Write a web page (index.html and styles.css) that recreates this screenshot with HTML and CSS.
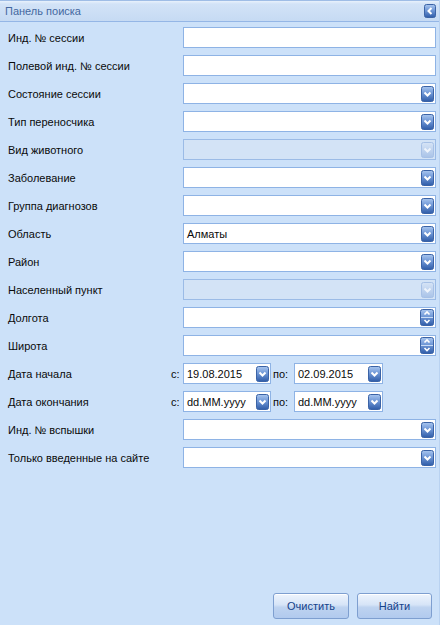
FILE: index.html
```html
<!DOCTYPE html>
<html lang="ru">
<head>
<meta charset="utf-8">
<title>Панель поиска</title>
<link rel="stylesheet" href="styles.css">
</head>
<body>
<svg class="defs" width="0" height="0" aria-hidden="true">
  <defs>
    <linearGradient id="gb" x1="0" y1="0" x2="0" y2="1">
      <stop offset="0" stop-color="#a9c6ef"/>
      <stop offset="0.45" stop-color="#6f97d6"/>
      <stop offset="1" stop-color="#2f5ca8"/>
    </linearGradient>
    <linearGradient id="gd" x1="0" y1="0" x2="0" y2="1">
      <stop offset="0" stop-color="#d6e4f6"/>
      <stop offset="1" stop-color="#a9c3e8"/>
    </linearGradient>
    <symbol id="dd" viewBox="0 0 13 16">
      <rect x="0.5" y="0.5" width="12" height="15" rx="2" fill="url(#gb)" stroke="#3b63a6"/>
      <path d="M3.5 6.5 L6.5 9.5 L9.5 6.5" fill="none" stroke="#fff" stroke-width="2"/>
    </symbol>
    <symbol id="ddoff" viewBox="0 0 13 16">
      <rect x="0.5" y="0.5" width="12" height="15" rx="2" fill="url(#gd)" stroke="#a6c0e6"/>
      <path d="M3.5 6.5 L6.5 9.5 L9.5 6.5" fill="none" stroke="#eef4fc" stroke-width="2"/>
    </symbol>
    <symbol id="spin" viewBox="0 0 14 17">
      <rect x="0.5" y="0.5" width="13" height="16" rx="2" fill="url(#gb)" stroke="#3b63a6"/>
      <path d="M1 8.5 H13" stroke="#c9dcf5" stroke-width="1"/>
      <path d="M4.5 5.5 L7 3 L9.5 5.5" fill="none" stroke="#fff" stroke-width="1.6"/>
      <path d="M4.5 11 L7 13.5 L9.5 11" fill="none" stroke="#fff" stroke-width="1.6"/>
    </symbol>
    <symbol id="close" viewBox="0 0 12 14">
      <rect x="0.5" y="0.5" width="11" height="13" rx="2" fill="url(#gb)" stroke="#3b63a6"/>
      <path d="M7.5 4 L4.5 7 L7.5 10" fill="none" stroke="#fff" stroke-width="2"/>
    </symbol>
  </defs>
</svg>

<div class="panel">
  <div class="panel-header">
    <span class="panel-title">Панель поиска</span>
    <svg class="close-btn" width="12" height="14"><use href="#close"/></svg>
  </div>
  <div class="panel-body">
    <div class="form">
      <div class="row"><span class="label">Инд. № сессии</span><div class="field"><div class="input"></div></div></div>
      <div class="row"><span class="label">Полевой инд. № сессии</span><div class="field"><div class="input"></div></div></div>
      <div class="row"><span class="label">Состояние сессии</span><div class="field"><div class="input combo"><span class="val"></span><svg class="trig" width="13" height="16"><use href="#dd"/></svg></div></div></div>
      <div class="row"><span class="label">Тип переносчика</span><div class="field"><div class="input combo"><span class="val"></span><svg class="trig" width="13" height="16"><use href="#dd"/></svg></div></div></div>
      <div class="row"><span class="label">Вид животного</span><div class="field"><div class="input combo disabled"><span class="val"></span><svg class="trig" width="13" height="16"><use href="#ddoff"/></svg></div></div></div>
      <div class="row"><span class="label">Заболевание</span><div class="field"><div class="input combo"><span class="val"></span><svg class="trig" width="13" height="16"><use href="#dd"/></svg></div></div></div>
      <div class="row"><span class="label">Группа диагнозов</span><div class="field"><div class="input combo"><span class="val"></span><svg class="trig" width="13" height="16"><use href="#dd"/></svg></div></div></div>
      <div class="row"><span class="label">Область</span><div class="field"><div class="input combo"><span class="val">Алматы</span><svg class="trig" width="13" height="16"><use href="#dd"/></svg></div></div></div>
      <div class="row"><span class="label">Район</span><div class="field"><div class="input combo"><span class="val"></span><svg class="trig" width="13" height="16"><use href="#dd"/></svg></div></div></div>
      <div class="row"><span class="label">Населенный пункт</span><div class="field"><div class="input combo disabled"><span class="val"></span><svg class="trig" width="13" height="16"><use href="#ddoff"/></svg></div></div></div>
      <div class="row"><span class="label">Долгота</span><div class="field"><div class="input combo"><span class="val"></span><svg class="trig spinner" width="14" height="17"><use href="#spin"/></svg></div></div></div>
      <div class="row"><span class="label">Широта</span><div class="field"><div class="input combo"><span class="val"></span><svg class="trig spinner" width="14" height="17"><use href="#spin"/></svg></div></div></div>
      <div class="row"><span class="label">Дата начала</span>
        <div class="dates">
          <span class="pre">с:</span>
          <div class="input combo date"><span class="val">19.08.2015</span><svg class="trig" width="13" height="16"><use href="#dd"/></svg></div>
          <span class="pre po">по:</span>
          <div class="input combo date date2"><span class="val">02.09.2015</span><svg class="trig" width="13" height="16"><use href="#dd"/></svg></div>
        </div>
      </div>
      <div class="row"><span class="label">Дата окончания</span>
        <div class="dates">
          <span class="pre">с:</span>
          <div class="input combo date"><span class="val">dd.MM.yyyy</span><svg class="trig" width="13" height="16"><use href="#dd"/></svg></div>
          <span class="pre po">по:</span>
          <div class="input combo date date2"><span class="val">dd.MM.yyyy</span><svg class="trig" width="13" height="16"><use href="#dd"/></svg></div>
        </div>
      </div>
      <div class="row"><span class="label">Инд. № вспышки</span><div class="field"><div class="input combo"><span class="val"></span><svg class="trig" width="13" height="16"><use href="#dd"/></svg></div></div></div>
      <div class="row"><span class="label">Только введенные на сайте</span><div class="field"><div class="input combo"><span class="val"></span><svg class="trig" width="13" height="16"><use href="#dd"/></svg></div></div></div>
    </div>
    <div class="actions">
      <button class="btn btn-clear" type="button">Очистить</button>
      <button class="btn btn-find" type="button">Найти</button>
    </div>
  </div>
</div>
</body>
</html>
```

FILE: styles.css
```css
html, body {
  margin: 0;
  padding: 0;
  width: 440px;
  height: 625px;
  overflow: hidden;
  background: #cce1f9;
  font-family: "Liberation Sans", Arial, sans-serif;
  font-size: 11px;
}

.defs {
  position: absolute;
  width: 0;
  height: 0;
}

.panel {
  width: 440px;
  height: 625px;
  box-sizing: border-box;
  display: flex;
  flex-direction: column;
  border-right: 1px solid #b9d2f1;
}

.panel-header {
  height: 22px;
  box-sizing: border-box;
  border-top: 1px solid #9fbde6;
  border-bottom: 1px solid #94b6e6;
  background: linear-gradient(180deg, #e8f1fc 0, #d2e3f7 3px, #c6daf3 100%);
  display: flex;
  align-items: center;
  justify-content: space-between;
  padding: 0 3px 1px 5px;
}

.panel-title {
  color: #4468a0;
  font-size: 11px;
}

.close-btn {
  display: block;
  margin-top: 1px;
}

.panel-body {
  flex: 1;
  display: flex;
  flex-direction: column;
  justify-content: space-between;
  padding: 5px 3px 6px 8px;
}

.form {
  display: flex;
  flex-direction: column;
  gap: 7px;
}

.row {
  height: 21px;
  display: flex;
  align-items: center;
}

.label {
  flex: 1;
  color: #0a0a0a;
  white-space: nowrap;
}

.field {
  width: 253px;
}

.input {
  height: 21px;
  box-sizing: border-box;
  background: #fff;
  border: 1px solid #8eb3e5;
  display: flex;
  align-items: center;
  padding: 0 1px 0 3px;
  color: #0a0a0a;
}

.val {
  flex: 1;
  white-space: nowrap;
}

.trig {
  display: block;
  flex: none;
}

.disabled {
  background: #d3e3f6;
  border-color: #9bbbe6;
}

.dates {
  display: flex;
  align-items: center;
  margin-right: 53px;
}

.pre {
  color: #0a0a0a;
  width: 12px;
}

.po {
  width: 21px;
  margin-left: 2px;
}

.date {
  width: 88px;
}

.date2 {
  width: 89px;
}

.actions {
  display: flex;
  justify-content: flex-end;
  gap: 8px;
  padding-right: 4px;
}

.btn {
  height: 26px;
  box-sizing: border-box;
  border: 1px solid #7e9fd0;
  border-radius: 3px;
  background: linear-gradient(180deg, #eef4fd 0%, #d6e4f7 45%, #bed3f0 55%, #b1caee 100%);
  color: #15428b;
  font-family: "Liberation Sans", Arial, sans-serif;
  font-size: 11px;
  padding: 0;
  box-shadow: inset 0 1px 0 #fff;
}

.btn-clear {
  width: 76px;
}

.btn-find {
  width: 75px;
}
```
